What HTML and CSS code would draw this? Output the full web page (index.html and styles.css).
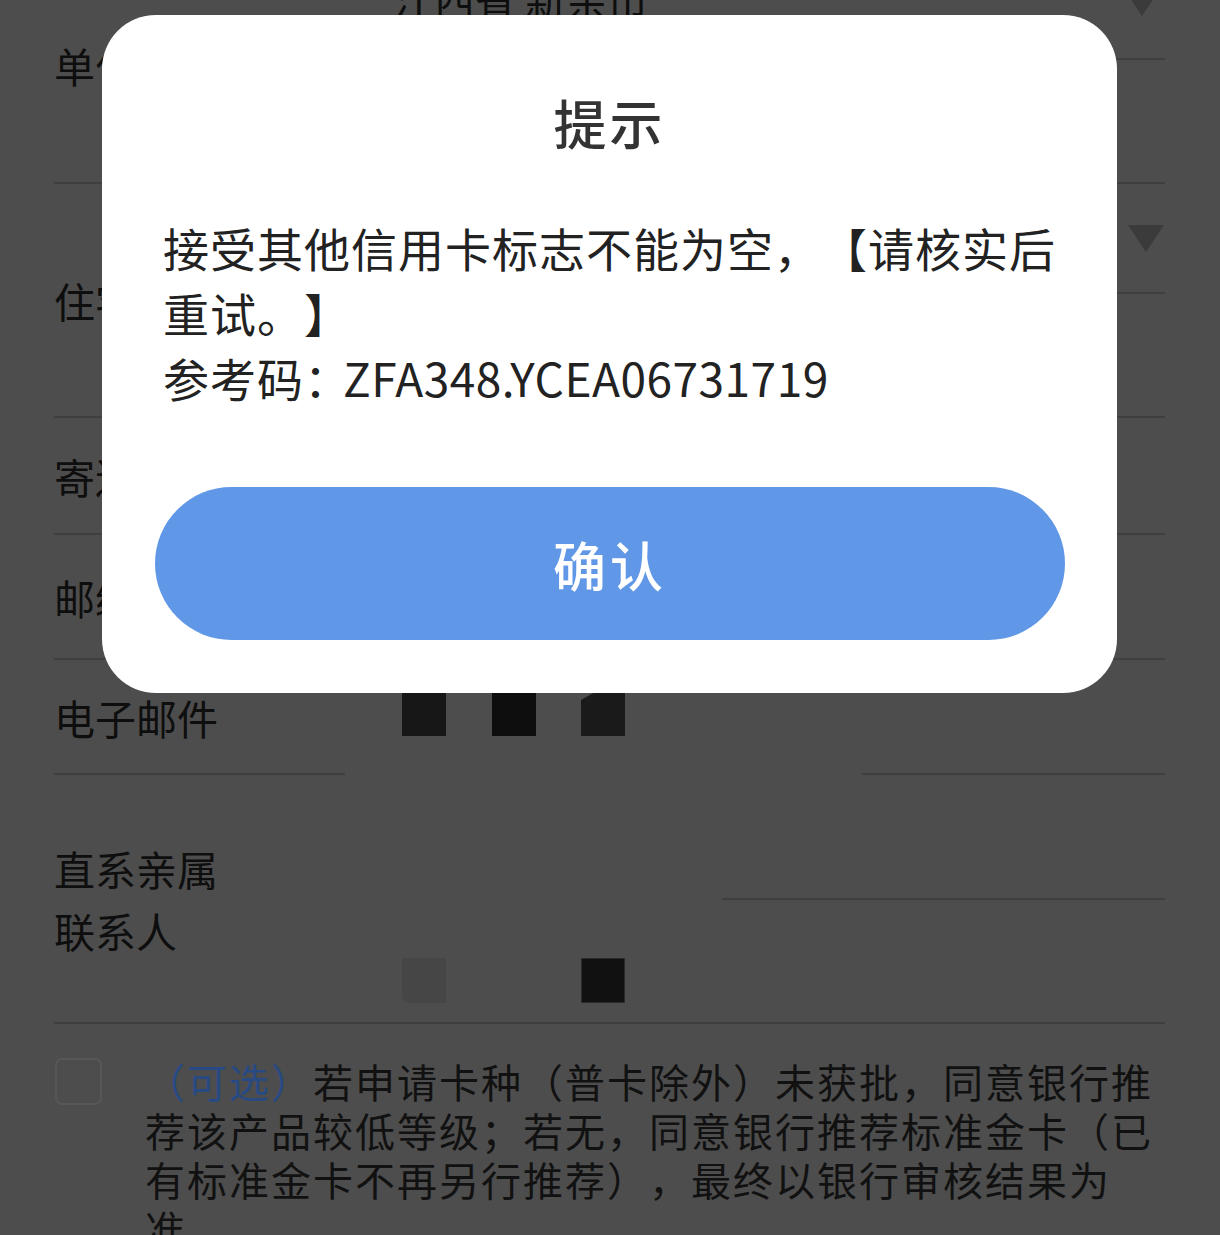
FILE: index.html
```html
<!DOCTYPE html>
<html lang="zh-CN">
<head>
<meta charset="utf-8">
<title>提示</title>
<link rel="stylesheet" href="styles.css">
</head>
<body>
<div class="page">
  <div class="form">
    <div class="row row-1">
      <div class="label label-1">单位地址</div>
      <div class="value">
        <div class="select select-1">
          <span class="select-text">江西省 新余市</span>
          <span class="tri tri-1"></span>
        </div>
      </div>
    </div>
    <div class="row row-2">
      <div class="label label-2">住宅地址</div>
      <div class="value">
        <div class="select select-2">
          <span class="select-text">江西省 新余市</span>
          <span class="tri tri-2"></span>
        </div>
      </div>
    </div>
    <div class="row row-3">
      <div class="label label-c">寄送地址</div>
      <div class="value"></div>
    </div>
    <div class="row row-4">
      <div class="label label-c">邮编</div>
      <div class="value"></div>
    </div>
    <div class="row row-5">
      <div class="label label-c">电子邮件</div>
      <div class="value">
        <div class="blocks blocks-5">
          <span class="blk blk-a"></span>
          <span class="blk blk-b"></span>
          <span class="blk blk-c"></span>
        </div>
      </div>
    </div>
    <div class="split-line">
      <span class="seg seg-l"></span>
      <span class="seg seg-r"></span>
    </div>
    <div class="row row-6">
      <div class="label label-6">直系亲属<br>联系人</div>
      <div class="value">
        <div class="input-line"></div>
        <div class="blocks blocks-6">
          <span class="blk blk-d"></span>
          <span class="blk blk-e"></span>
        </div>
      </div>
    </div>
    <div class="agree">
      <span class="checkbox"></span>
      <p class="agree-text"><span class="opt">（可选）</span>若申请卡种（普卡除外）未获批，同意银行推荐该产品较低等级；若无，同意银行推荐标准金卡（已有标准金卡不再另行推荐），最终以银行审核结果为准。</p>
    </div>
  </div>

  <div class="dialog">
    <h2 class="dialog-title">提示</h2>
    <div class="dialog-msg">
      <p class="msg-line">接受其他信用卡标志不能为空，【请核实后重试。】</p>
      <p class="msg-line">参考码：<span class="code">ZFA348.YCEA06731719</span></p>
    </div>
    <button class="dialog-btn" type="button">确认</button>
  </div>
</div>
</body>
</html>
```

FILE: styles.css
```css
* { box-sizing: border-box; }

html, body {
  margin: 0;
  padding: 0;
}

body {
  background: #4d4d4d;
  font-family: "Noto Sans CJK SC", "Noto Sans", sans-serif;
  color: #101010;
  width: 1220px;
  height: 1235px;
  overflow: hidden;
  text-spacing-trim: space-all;
}

.page {
  position: relative;
  width: 1220px;
  height: 1235px;
  overflow: hidden;
}

.form {
  margin-left: 54px;
  width: 1111px;
}

.row {
  display: grid;
  grid-template-columns: 291px 1fr;
  border-bottom: 2px solid #3f3f3f;
}

.label {
  font-size: 41px;
  line-height: 48px;
  color: #0e0e0e;
  white-space: nowrap;
}

.label-c { align-self: center; }
.label-1 { margin-top: 81px; }
.label-2 { margin-top: 92px; }
.label-6 { margin-top: 62px; line-height: 62px; }

.row-1 { height: 224px; margin-top: -40px; }
.row-2 { height: 234px; }
.row-3 { height: 117px; }
.row-4 { height: 125px; }
.row-5 { height: 113px; border-bottom: none; }
.row-6 { height: 249px; }

.select {
  display: flex;
  justify-content: space-between;
  align-items: flex-start;
  border-bottom: 2px solid #3f3f3f;
}

.select-1 { height: 100px; padding-top: 15px; }
.select-2 { height: 110px; padding-top: 20px; }

.select-text {
  margin-left: 48px;
  font-size: 41px;
  line-height: 48px;
  color: #0e0e0e;
}

.tri {
  width: 0;
  height: 0;
  border-left: 18px solid transparent;
  border-right: 18px solid transparent;
  border-top: 27px solid #3b3b3b;
}

.tri-1 { margin-top: 14px; margin-right: 5px; }
.tri-2 { margin-top: 21px; margin-right: 1px; }

.blocks {
  display: flex;
  margin-left: 57px;
}

.blocks-5 {
  margin-top: 30px;
  gap: 46px;
}

.blk {
  display: block;
  width: 44px;
  height: 46px;
}

.blk-a { background: #171717; }
.blk-b { background: #0e0e0e; }
.blk-c {
  background: #1a1a1a;
  margin-left: -1px;
  clip-path: polygon(0 22%, 40% 0, 100% 0, 100% 100%, 0 100%);
}

.split-line {
  display: flex;
  justify-content: space-between;
  height: 2px;
}

.seg { display: block; height: 2px; background: #3f3f3f; }
.seg-l { width: 291px; }
.seg-r { width: 303px; }

.input-line {
  margin-left: 377px;
  height: 125px;
  border-bottom: 2px solid #3f3f3f;
}

.blocks-6 {
  margin-top: 58px;
  gap: 135px;
}

.blk-d {
  background: #464646;
  height: 45px;
  border-bottom-left-radius: 8px;
}

.blk-e {
  background: #111111;
  height: 45px;
  border: 1px solid #2a2a2a;
}

.agree {
  display: grid;
  grid-template-columns: 91px 1fr;
  padding-top: 33px;
}

.checkbox {
  display: block;
  width: 47px;
  height: 47px;
  margin-left: 1px;
  margin-top: 1px;
  border: 2px solid #575757;
  border-radius: 7px;
}

.agree-text {
  margin: 0;
  width: 1030px;
  font-size: 40px;
  line-height: 49px;
  letter-spacing: 2px;
  color: #111111;
}

.opt { color: #284a84; }

.dialog {
  position: absolute;
  left: 102px;
  top: 15px;
  width: 1015px;
  height: 678px;
  background: #ffffff;
  border-radius: 54px;
  display: flex;
  flex-direction: column;
}

.dialog-title {
  margin: 81px 0 0;
  text-align: center;
  font-size: 53px;
  line-height: 52px;
  font-weight: 500;
  color: #333333;
  letter-spacing: 3px;
}

.dialog-msg {
  margin: 67px 0 0 61px;
  width: 900px;
}

.msg-line {
  margin: 0;
  font-size: 46px;
  line-height: 65px;
  letter-spacing: 1px;
  color: #222222;
}

.code {
  margin-left: -8px;
  letter-spacing: 0.5px;
}

.dialog-btn {
  margin: 77px 0 0 53px;
  width: 910px;
  height: 153px;
  border: none;
  border-radius: 77px;
  background: #6097e6;
  color: #ffffff;
  font-family: "Noto Sans CJK SC", "Noto Sans", sans-serif;
  font-size: 53px;
  font-weight: 500;
  letter-spacing: 4px;
  padding: 0;
}
```
